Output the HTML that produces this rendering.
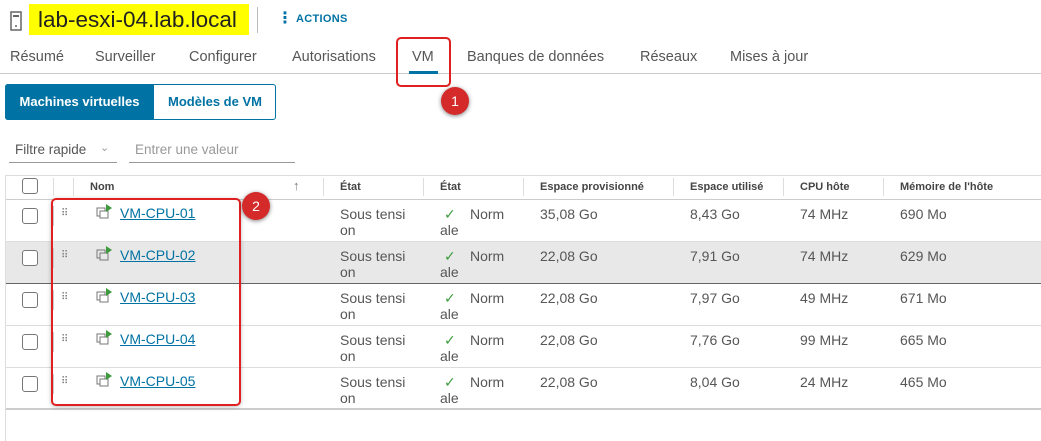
<!DOCTYPE html>
<html><head><meta charset="utf-8"><style>
*{margin:0;padding:0;box-sizing:border-box}
body{width:1041px;height:441px;background:#fff;font-family:"Liberation Sans","DejaVu Sans",sans-serif;color:#454545;position:relative;overflow:hidden}
.a{position:absolute;white-space:nowrap}
.tab{position:absolute;top:49px;font-size:14.5px;color:#565656}
.h{position:absolute;top:181px;font-size:11px;font-weight:bold;color:#454545}
.sep{position:absolute;top:178px;width:1px;height:18px;background:#ddd}
.row{position:absolute;left:6px;right:0;height:42px;border-bottom:1px solid #ddd}
.c{position:absolute;font-size:14px;color:#565656;line-height:16px}
.cb{position:absolute;left:16px;top:8px;width:16px;height:16px;border:1px solid #777;border-radius:3px;background:#fff}
.vl{position:absolute;left:47px;top:6px;width:1px;height:20px;background:#ccc}
.drag{position:absolute;left:55px;top:11px;font-size:10px;color:#777;letter-spacing:-1px;line-height:5px}
.lnk{position:absolute;left:114px;top:5px;font-size:14px;color:#0072a3;text-decoration:underline}
</style></head><body>
<svg class="a" style="left:10px;top:11px" width="12" height="20" viewBox="0 0 12 20"><rect x="1" y="1" width="10" height="18" fill="none" stroke="#666" stroke-width="1.5"/><rect x="3" y="4" width="6" height="2" fill="#666"/><circle cx="6" cy="15" r="1" fill="#666"/></svg>
<div class="a" style="left:29px;top:4px;width:220px;height:31px;background:#ffff00"></div>
<div class="a" style="left:38px;top:5px;font-size:22.5px;color:#222;line-height:30px">lab-esxi-04.lab.local</div>
<div class="a" style="left:257px;top:7px;width:1px;height:26px;background:#bbb"></div>
<div class="a" style="left:277px;top:11px;font-size:16px;color:#0072a3;font-weight:bold;line-height:16px">&#8942;</div>
<div class="a" style="left:296px;top:13px;font-size:11px;color:#0072a3;font-weight:bold;letter-spacing:.3px">ACTIONS</div>
<div class="tab" style="left:10px">Résumé</div>
<div class="tab" style="left:95px">Surveiller</div>
<div class="tab" style="left:189px">Configurer</div>
<div class="tab" style="left:292px">Autorisations</div>
<div class="tab" style="left:412px">VM</div>
<div class="tab" style="left:467px">Banques de données</div>
<div class="tab" style="left:640px">Réseaux</div>
<div class="tab" style="left:730px">Mises à jour</div>
<div class="a" style="left:0;top:73px;width:1041px;height:1px;background:#ccc"></div>
<div class="a" style="left:409px;top:71px;width:29px;height:3px;background:#0072a3"></div>
<div class="a" style="left:396px;top:37px;width:55px;height:50px;border:2px solid #e02020;border-radius:5px"></div>
<div class="a" style="left:441px;top:87px;width:28px;height:28px;border-radius:50%;background:#d42a2a;color:#fff;font-size:14px;text-align:center;line-height:28px;box-shadow:0 1px 4px rgba(0,0,0,.5)">1</div>
<div class="a" style="left:5px;top:84px;width:271px;height:36px;border:1px solid #0072a3;border-radius:3px"></div>
<div class="a" style="left:5px;top:84px;width:149px;height:36px;background:#0072a3;border-radius:3px 0 0 3px;color:#fff;font-size:13px;font-weight:bold;text-align:center;line-height:36px">Machines virtuelles</div>
<div class="a" style="left:154px;top:84px;width:122px;height:36px;color:#0072a3;font-size:13px;font-weight:bold;text-align:center;line-height:36px">Modèles de VM</div>
<div class="a" style="left:15px;top:142px;font-size:13.5px;color:#565656">Filtre rapide</div>
<div class="a" style="left:100px;top:141px;font-size:11px;color:#999">&#8964;</div>
<div class="a" style="left:9px;top:162px;width:108px;height:1px;background:#999"></div>
<div class="a" style="left:135px;top:142px;font-size:13.5px;color:#999">Entrer une valeur</div>
<div class="a" style="left:129px;top:162px;width:166px;height:1px;background:#999"></div>
<div class="a" style="left:5px;top:175px;width:1036px;height:266px;border-left:1px solid #ddd;border-top:1px solid #ddd"></div>
<div class="a" style="left:22px;top:178px;width:16px;height:16px;border:1px solid #777;border-radius:3px"></div>
<div class="sep" style="left:53px"></div><div class="sep" style="left:73px"></div>
<div class="h" style="left:90px">Nom</div>
<div class="a" style="left:293px;top:178px;font-size:13px;color:#777">&#8593;</div>
<div class="sep" style="left:323px"></div><div class="h" style="left:340px">État</div>
<div class="sep" style="left:423px"></div><div class="h" style="left:440px">État</div>
<div class="sep" style="left:523px"></div><div class="h" style="left:540px">Espace provisionné</div>
<div class="sep" style="left:673px"></div><div class="h" style="left:690px">Espace utilisé</div>
<div class="sep" style="left:783px"></div><div class="h" style="left:800px">CPU hôte</div>
<div class="sep" style="left:883px"></div><div class="h" style="left:900px">Mémoire de l'hôte</div>
<div class="a" style="left:6px;top:199px;width:1035px;height:1px;background:#ccc"></div>

<div class="row" style="top:200px"><div class="cb"></div><div class="vl"></div><div class="drag">⠿</div>
<svg class="a" style="left:90px;top:4px" width="17" height="15" viewBox="0 0 17 15"><rect x="1" y="4" width="8" height="8" fill="none" stroke="#777"/><rect x="4" y="7" width="8" height="7" fill="#fff" stroke="#777"/><path d="M10 0 L16 4 L10 8Z" fill="#3c9a3c"/></svg>
<div class="lnk">VM-CPU-01</div><div class="c" style="left:334px;top:6px">Sous tensi<br>on</div><div class="c" style="left:438px;top:6px;color:#3c9a3c">✓</div><div class="c" style="left:464px;top:6px">Norm</div><div class="c" style="left:434px;top:22px">ale</div><div class="c" style="left:534px;top:6px">35,08 Go</div><div class="c" style="left:684px;top:6px">8,43 Go</div><div class="c" style="left:794px;top:6px">74 MHz</div><div class="c" style="left:894px;top:6px">690 Mo</div></div>

<div class="row" style="top:242px;background:#e8e8e8;border-bottom:1px solid #666"><div class="cb"></div><div class="vl"></div><div class="drag">⠿</div>
<svg class="a" style="left:90px;top:4px" width="17" height="15" viewBox="0 0 17 15"><rect x="1" y="4" width="8" height="8" fill="none" stroke="#777"/><rect x="4" y="7" width="8" height="7" fill="#e8e8e8" stroke="#777"/><path d="M10 0 L16 4 L10 8Z" fill="#3c9a3c"/></svg>
<div class="lnk">VM-CPU-02</div><div class="c" style="left:334px;top:6px">Sous tensi<br>on</div><div class="c" style="left:438px;top:6px;color:#3c9a3c">✓</div><div class="c" style="left:464px;top:6px">Norm</div><div class="c" style="left:434px;top:22px">ale</div><div class="c" style="left:534px;top:6px">22,08 Go</div><div class="c" style="left:684px;top:6px">7,91 Go</div><div class="c" style="left:794px;top:6px">74 MHz</div><div class="c" style="left:894px;top:6px">629 Mo</div></div>

<div class="row" style="top:284px"><div class="cb"></div><div class="vl"></div><div class="drag">⠿</div>
<svg class="a" style="left:90px;top:4px" width="17" height="15" viewBox="0 0 17 15"><rect x="1" y="4" width="8" height="8" fill="none" stroke="#777"/><rect x="4" y="7" width="8" height="7" fill="#fff" stroke="#777"/><path d="M10 0 L16 4 L10 8Z" fill="#3c9a3c"/></svg>
<div class="lnk">VM-CPU-03</div><div class="c" style="left:334px;top:6px">Sous tensi<br>on</div><div class="c" style="left:438px;top:6px;color:#3c9a3c">✓</div><div class="c" style="left:464px;top:6px">Norm</div><div class="c" style="left:434px;top:22px">ale</div><div class="c" style="left:534px;top:6px">22,08 Go</div><div class="c" style="left:684px;top:6px">7,97 Go</div><div class="c" style="left:794px;top:6px">49 MHz</div><div class="c" style="left:894px;top:6px">671 Mo</div></div>

<div class="row" style="top:326px"><div class="cb"></div><div class="vl"></div><div class="drag">⠿</div>
<svg class="a" style="left:90px;top:4px" width="17" height="15" viewBox="0 0 17 15"><rect x="1" y="4" width="8" height="8" fill="none" stroke="#777"/><rect x="4" y="7" width="8" height="7" fill="#fff" stroke="#777"/><path d="M10 0 L16 4 L10 8Z" fill="#3c9a3c"/></svg>
<div class="lnk">VM-CPU-04</div><div class="c" style="left:334px;top:6px">Sous tensi<br>on</div><div class="c" style="left:438px;top:6px;color:#3c9a3c">✓</div><div class="c" style="left:464px;top:6px">Norm</div><div class="c" style="left:434px;top:22px">ale</div><div class="c" style="left:534px;top:6px">22,08 Go</div><div class="c" style="left:684px;top:6px">7,76 Go</div><div class="c" style="left:794px;top:6px">99 MHz</div><div class="c" style="left:894px;top:6px">665 Mo</div></div>

<div class="row" style="top:368px;border-bottom:2px solid #ccc"><div class="cb"></div><div class="vl"></div><div class="drag">⠿</div>
<svg class="a" style="left:90px;top:4px" width="17" height="15" viewBox="0 0 17 15"><rect x="1" y="4" width="8" height="8" fill="none" stroke="#777"/><rect x="4" y="7" width="8" height="7" fill="#fff" stroke="#777"/><path d="M10 0 L16 4 L10 8Z" fill="#3c9a3c"/></svg>
<div class="lnk">VM-CPU-05</div><div class="c" style="left:334px;top:6px">Sous tensi<br>on</div><div class="c" style="left:438px;top:6px;color:#3c9a3c">✓</div><div class="c" style="left:464px;top:6px">Norm</div><div class="c" style="left:434px;top:22px">ale</div><div class="c" style="left:534px;top:6px">22,08 Go</div><div class="c" style="left:684px;top:6px">8,04 Go</div><div class="c" style="left:794px;top:6px">24 MHz</div><div class="c" style="left:894px;top:6px">465 Mo</div></div>

<div class="a" style="left:51px;top:198px;width:190px;height:208px;border:2px solid #e02020;border-radius:5px;box-shadow:0 1px 4px rgba(0,0,0,.25)"></div>
<div class="a" style="left:242px;top:192px;width:28px;height:28px;border-radius:50%;background:#d42a2a;color:#fff;font-size:14px;text-align:center;line-height:28px;box-shadow:0 1px 4px rgba(0,0,0,.5)">2</div>
</body></html>
